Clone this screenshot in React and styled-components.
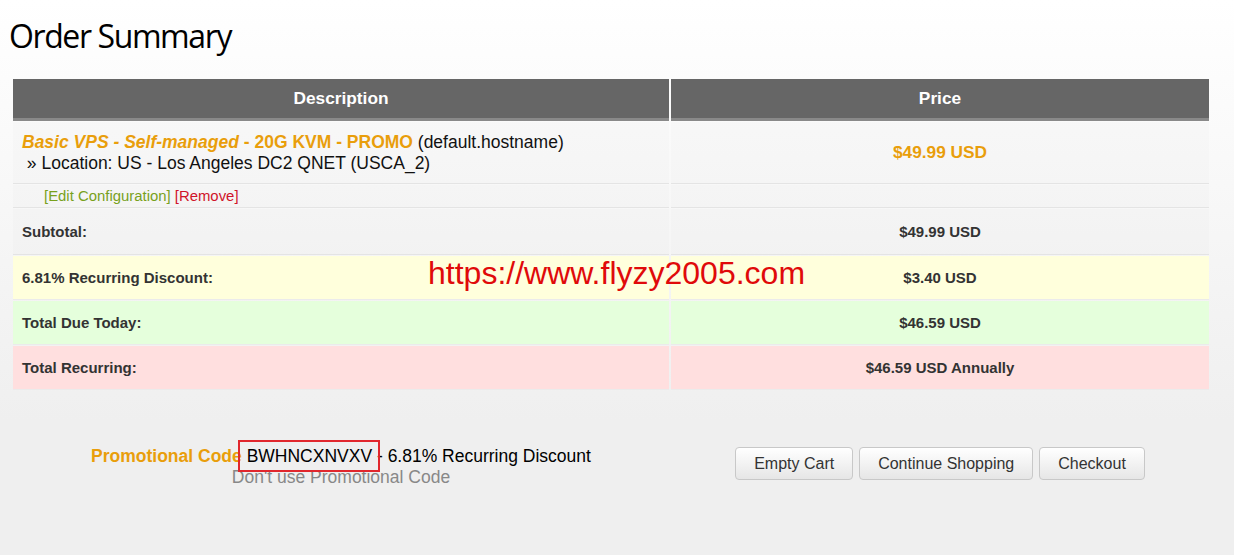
import React from 'react'
import styled, { createGlobalStyle } from 'styled-components'

const GlobalStyle = createGlobalStyle`
  html, body {
    margin: 0;
    padding: 0;
  }
  body {
    min-height: 555px;
    background: linear-gradient(to bottom, #ffffff 0px, #efefef 420px, #efefef 100%);
    font-family: "Liberation Sans", Arial, sans-serif;
    color: #333;
  }
`

const ORANGE = '#e99e0b'

const Page = styled.div`
  padding: 0 0 0 13px;
  width: 1196px;
`

const Title = styled.h1`
  margin: 0;
  padding: 16px 0 0 0;
  margin-left: -4px;
  height: 79px;
  box-sizing: border-box;
  font-family: "Open Sans", "Noto Sans", sans-serif;
  font-weight: 400;
  font-size: 32px;
  line-height: 40px;
  letter-spacing: -1.4px;
  color: #000;
`

const TableWrap = styled.div`
  position: relative;
  display: grid;
  grid-template-columns: 656px 538px;
  column-gap: 2px;
  row-gap: 1px;
`

const HeadCell = styled.div`
  height: 39px;
  background: #666666;
  border-bottom: 3px solid #898989;
  color: #fff;
  font-weight: 700;
  font-size: 17.3px;
  display: flex;
  align-items: center;
  justify-content: center;
`

const Cell = styled.div`
  height: ${p => p.$h}px;
  background: ${p => p.$bg || 'rgba(0, 0, 0, 0.012)'};
  border-bottom: 1px solid ${p => p.$line || '#e4e4e4'};
  box-sizing: content-box;
  display: flex;
  align-items: center;
  justify-content: ${p => (p.$center ? 'center' : 'flex-start')};
  padding: 0 9px;
  font-weight: ${p => (p.$bold ? 700 : 400)};
  font-size: ${p => p.$size || 15}px;
  color: #333;
`

const Product = styled.div`
  font-size: 17.5px;
  line-height: 21px;
  color: #111;
`

const Name = styled.span`
  color: ${ORANGE};
  font-weight: 700;
  font-style: ${p => (p.$italic ? 'italic' : 'normal')};
`

const BigPrice = styled.span`
  color: ${ORANGE};
  font-weight: 700;
  font-size: 17.3px;
`

const Links = styled.div`
  padding-left: 22px;
  font-size: 14.9px;
`

const Link = styled.a`
  color: ${p => p.$color};
  text-decoration: none;
`

const Watermark = styled.div`
  position: absolute;
  left: 415px;
  top: 176px;
  font-size: 32px;
  line-height: 36px;
  color: #e00a0a;
  pointer-events: none;
`

const Bottom = styled.div`
  display: grid;
  grid-template-columns: 656px 538px;
  column-gap: 2px;
  margin-top: 56px;
  align-items: start;
`

const Promo = styled.div`
  text-align: center;
  font-size: 17.5px;
  line-height: 21px;
  color: #000;
`

const PromoLabel = styled.span`
  color: ${ORANGE};
  font-weight: 700;
`

const Code = styled.span`
  position: relative;
  &::after {
    content: '';
    position: absolute;
    left: -9px;
    right: -8px;
    top: -6px;
    bottom: -6px;
    border: 2px solid #e1272d;
  }
`

const Remove = styled.div`
  color: #888;
`

const Buttons = styled.div`
  display: flex;
  justify-content: center;
  gap: 6px;
  padding-top: 1px;
`

const Button = styled.button`
  height: 33px;
  padding: 0 18px;
  font-family: "Liberation Sans", Arial, sans-serif;
  font-size: 16px;
  color: #333;
  background: linear-gradient(to bottom, #ffffff 0%, #e6e6e6 100%);
  border: 1px solid #c8c8c8;
  border-radius: 4px;
  box-shadow: inset 0 1px 0 rgba(255, 255, 255, 0.6);
  cursor: pointer;
`

const totals = [
  { label: 'Subtotal:', value: '$49.99 USD', h: 45 },
  { label: '6.81% Recurring Discount:', value: '$3.40 USD', h: 43, bg: '#ffffdc', line: '#ebebeb' },
  { label: 'Total Due Today:', value: '$46.59 USD', h: 43, bg: '#e5ffdc', line: '#ebebeb' },
  { label: 'Total Recurring:', value: '$46.59 USD Annually', h: 43, bg: '#ffdfdf', line: '#ebebeb' },
]

function App() {
  return (
    <Page>
      <GlobalStyle />
      <Title>Order Summary</Title>
      <TableWrap>
        <HeadCell>Description</HeadCell>
        <HeadCell>Price</HeadCell>

        <Cell $h={61}>
          <Product>
            <Name $italic>Basic VPS - Self-managed</Name>
            <Name> - 20G KVM - PROMO</Name> (default.hostname)
            <br />
            &nbsp;» Location: US - Los Angeles DC2 QNET (USCA_2)
          </Product>
        </Cell>
        <Cell $h={61} $center>
          <BigPrice>$49.99 USD</BigPrice>
        </Cell>

        <Cell $h={22}>
          <Links>
            <Link $color="#79a11c" href="#">[Edit Configuration]</Link>{' '}
            <Link $color="#d0142a" href="#">[Remove]</Link>
          </Links>
        </Cell>
        <Cell $h={22} />

        {totals.map(t => (
          <React.Fragment key={t.label}>
            <Cell $h={t.h} $bg={t.bg} $line={t.line} $bold>{t.label}</Cell>
            <Cell $h={t.h} $bg={t.bg} $line={t.line} $bold $center>{t.value}</Cell>
          </React.Fragment>
        ))}

        <Watermark>https://www.flyzy2005.com</Watermark>
      </TableWrap>

      <Bottom>
        <Promo>
          <div>
            <PromoLabel>Promotional Code</PromoLabel> <Code>BWHNCXNVXV</Code> - 6.81% Recurring Discount
          </div>
          <Remove>Don't use Promotional Code</Remove>
        </Promo>
        <Buttons>
          <Button>Empty Cart</Button>
          <Button>Continue Shopping</Button>
          <Button>Checkout</Button>
        </Buttons>
      </Bottom>
    </Page>
  )
}

export default App
